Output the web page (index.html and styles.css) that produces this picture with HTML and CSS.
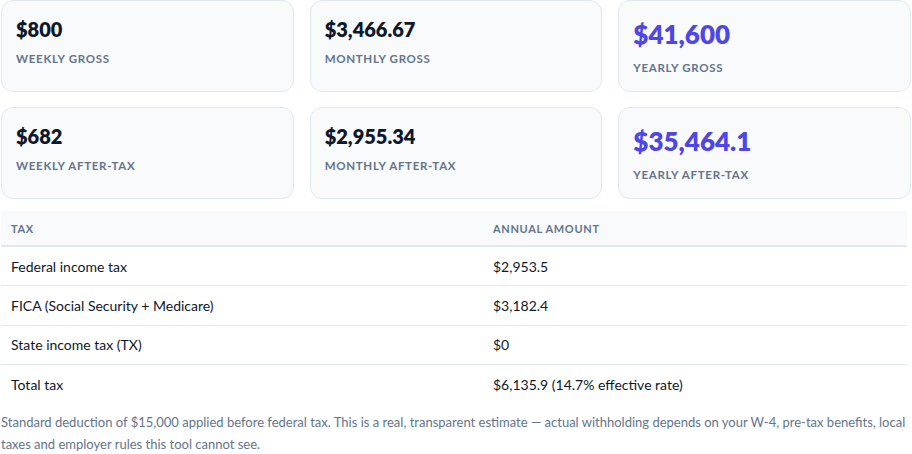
FILE: index.html
```html
<!DOCTYPE html>
<html lang="en">
<head>
<meta charset="utf-8">
<title>Paycheck estimate</title>
<link rel="stylesheet" href="styles.css">
</head>
<body>
<div class="wrap">
  <div class="cards">
    <div class="card">
      <div class="value">$800</div>
      <div class="label">Weekly gross</div>
    </div>
    <div class="card">
      <div class="value">$3,466.67</div>
      <div class="label">Monthly gross</div>
    </div>
    <div class="card card-hl">
      <div class="value">$41,600</div>
      <div class="label">Yearly gross</div>
    </div>
    <div class="card">
      <div class="value">$682</div>
      <div class="label">Weekly after-tax</div>
    </div>
    <div class="card">
      <div class="value">$2,955.34</div>
      <div class="label">Monthly after-tax</div>
    </div>
    <div class="card card-hl">
      <div class="value">$35,464.1</div>
      <div class="label">Yearly after-tax</div>
    </div>
  </div>

  <table class="tax">
    <thead>
      <tr><th class="c1">Tax</th><th>Annual amount</th></tr>
    </thead>
    <tbody>
      <tr><td>Federal income tax</td><td>$2,953.5</td></tr>
      <tr><td>FICA (Social Security + Medicare)</td><td>$3,182.4</td></tr>
      <tr><td>State income tax (TX)</td><td>$0</td></tr>
      <tr><td>Total tax</td><td>$6,135.9 (14.7% effective rate)</td></tr>
    </tbody>
  </table>

  <p class="note">Standard deduction of $15,000 applied before federal tax. This is a real, transparent estimate — actual withholding depends on your W-4, pre-tax benefits, local taxes and employer rules this tool cannot see.</p>
  <div class="next"></div>
</div>
</body>
</html>
```

FILE: styles.css
```css
* { box-sizing: border-box; }
html, body { margin: 0; padding: 0; background: #fff; }
body {
  font-family: "Lato", "Inter", "Noto Sans", sans-serif;
  color: #0f172a;
}
.wrap {
  width: 910px;
  margin-left: 1px;
}
.cards {
  display: grid;
  grid-template-columns: repeat(3, 1fr);
  gap: 15px 16px;
}
.card {
  height: 92px;
  background: #f8fafc;
  border: 1px solid #e2e8f0;
  border-radius: 12px;
  padding: 15px 14px;
}
.value {
  font-size: 20px;
  line-height: 26px;
  font-weight: 800;
  color: #0f172a;
}
.label {
  margin-top: 10px;
  font-size: 11.5px;
  line-height: 14px;
  font-weight: 700;
  letter-spacing: 0.06em;
  text-transform: uppercase;
  color: #64748b;
}
.card-hl { padding-top: 18px; }
.card-hl .value {
  font-size: 26px;
  line-height: 30px;
  color: #4f46e5;
}
.card-hl .label { margin-top: 12px; }

.tax {
  width: 906px;
  margin-top: 12px;
  border-collapse: collapse;
  font-size: 14px;
}
.tax th {
  background: #f8fafc;
  text-align: left;
  font-size: 11px;
  font-weight: 700;
  letter-spacing: 0.06em;
  text-transform: uppercase;
  color: #64748b;
  height: 35px;
  padding: 0 10px;
  border-bottom: 2px solid #e2e8f0;
}
.tax th.c1 { width: 482px; }
.tax td {
  height: 39.6px;
  padding: 0 10px;
  border-bottom: 1px solid #e2e8f0;
  color: #0f172a;
}
.tax tr:last-child td { border-bottom: none; }
.note {
  margin: 7px 0 0;
  font-size: 13px;
  line-height: 22px;
  color: #64748b;
}
.next {
  height: 12px;
  background: linear-gradient(#fff, #f5f6f9);
}
```
